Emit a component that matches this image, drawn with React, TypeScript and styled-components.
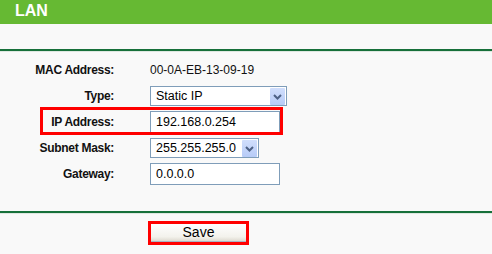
import React from 'react';
import styled, { createGlobalStyle } from 'styled-components';

const GlobalStyle = createGlobalStyle`
  html, body {
    margin: 0;
    padding: 0;
    background-color: #f9f9f9;
    font-family: "Liberation Sans", Arial, sans-serif;
  }
`;

const Page = styled.div`
  width: 492px;
  height: 254px;
  background-color: #f9f9f9;
  overflow: hidden;
`;

const Header = styled.div`
  height: 24px;
  background-color: #66b933;
  color: #fff;
  font-size: 16px;
  font-weight: bold;
  line-height: 22px;
  padding-left: 15px;
`;

const Divider = styled.div<{ $top: number }>`
  margin-top: ${p => p.$top}px;
  border-top: 2px solid #17703a;
  border-bottom: 1px solid #dfe8e1;
`;

const Form = styled.div`
  padding-top: 5px;
`;

const Row = styled.div<{ $highlight?: boolean }>`
  position: relative;
  display: grid;
  grid-template-columns: 114px auto;
  column-gap: 36px;
  align-items: center;
  height: 26px;

  ${p => p.$highlight && `
    &::after {
      content: '';
      position: absolute;
      left: 40px;
      top: -2px;
      width: 237px;
      height: 22px;
      border: 3px solid #f00;
      pointer-events: none;
    }
  `}
`;

const Label = styled.div`
  text-align: right;
  font-size: 12px;
  font-weight: bold;
  letter-spacing: -0.3px;
  color: #111;
`;

const Value = styled.div`
  font-size: 12px;
  color: #111;
  justify-self: start;
`;

const Select = styled.div<{ $width: number }>`
  display: flex;
  align-items: center;
  justify-content: space-between;
  box-sizing: border-box;
  width: ${p => p.$width}px;
  height: 20px;
  padding: 1px;
  border: 1px solid #7f9db9;
  background-color: #fff;
  font-size: 12.5px;
  color: #000;
`;

const SelectText = styled.span`
  padding-left: 4px;
`;

const ArrowButton = styled.span`
  display: flex;
  align-items: center;
  justify-content: center;
  width: 15px;
  height: 17px;
  margin-top: 1px;
  border-radius: 1px;
  background: linear-gradient(#d0defc, #b7cbf7);
`;

const TextInput = styled.input`
  box-sizing: border-box;
  width: 130px;
  height: 22px;
  margin: 0;
  padding: 0 0 0 5px;
  border: 1px solid #7f9db9;
  background-color: #fff;
  font-family: "Liberation Sans", Arial, sans-serif;
  font-size: 12.5px;
  color: #000;
  outline: none;
`;

const Actions = styled.div`
  padding: 9px 0 0 151px;
`;

const SaveButton = styled.button`
  box-sizing: border-box;
  width: 95px;
  height: 18px;
  margin: 0;
  padding: 0;
  border: none;
  border-bottom: 1px solid #a9b3c2;
  background: linear-gradient(#ffffff, #f3f2ec 75%, #dedad0);
  outline: 3px solid #f00;
  font-family: "Liberation Sans", Arial, sans-serif;
  font-size: 14px;
  line-height: 16px;
  color: #000;
`;

const Chevron = () => (
  <svg width="9" height="6" viewBox="0 0 9 6">
    <polyline points="1,1 4.5,4.5 8,1" fill="none" stroke="#4d6185" strokeWidth="2" />
  </svg>
);

const App = () => (
  <Page>
    <GlobalStyle />
    <Header>LAN</Header>
    <Divider $top={25} />
    <Form>
      <Row>
        <Label>MAC Address:</Label>
        <Value>00-0A-EB-13-09-19</Value>
      </Row>
      <Row>
        <Label>Type:</Label>
        <Select $width={137}>
          <SelectText>Static IP</SelectText>
          <ArrowButton><Chevron /></ArrowButton>
        </Select>
      </Row>
      <Row $highlight>
        <Label>IP Address:</Label>
        <TextInput defaultValue="192.168.0.254" />
      </Row>
      <Row>
        <Label>Subnet Mask:</Label>
        <Select $width={109}>
          <SelectText>255.255.255.0</SelectText>
          <ArrowButton><Chevron /></ArrowButton>
        </Select>
      </Row>
      <Row>
        <Label>Gateway:</Label>
        <TextInput defaultValue="0.0.0.0" />
      </Row>
    </Form>
    <Divider $top={24} />
    <Actions>
      <SaveButton type="button">Save</SaveButton>
    </Actions>
  </Page>
);

export default App;
